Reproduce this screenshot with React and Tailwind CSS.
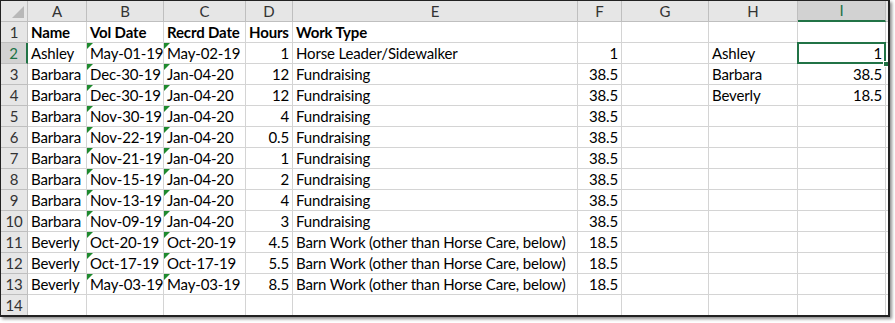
import React from "react";

const cols = ["A", "B", "C", "D", "E", "F", "G", "H", "I"];

const rows = [
  ["Ashley", "May-01-19", "May-02-19", "1", "Horse Leader/Sidewalker", "1", "", "Ashley", "1"],
  ["Barbara", "Dec-30-19", "Jan-04-20", "12", "Fundraising", "38.5", "", "Barbara", "38.5"],
  ["Barbara", "Dec-30-19", "Jan-04-20", "12", "Fundraising", "38.5", "", "Beverly", "18.5"],
  ["Barbara", "Nov-30-19", "Jan-04-20", "4", "Fundraising", "38.5", "", "", ""],
  ["Barbara", "Nov-22-19", "Jan-04-20", "0.5", "Fundraising", "38.5", "", "", ""],
  ["Barbara", "Nov-21-19", "Jan-04-20", "1", "Fundraising", "38.5", "", "", ""],
  ["Barbara", "Nov-15-19", "Jan-04-20", "2", "Fundraising", "38.5", "", "", ""],
  ["Barbara", "Nov-13-19", "Jan-04-20", "4", "Fundraising", "38.5", "", "", ""],
  ["Barbara", "Nov-09-19", "Jan-04-20", "3", "Fundraising", "38.5", "", "", ""],
  ["Beverly", "Oct-20-19", "Oct-20-19", "4.5", "Barn Work (other than Horse Care, below)", "18.5", "", "", ""],
  ["Beverly", "Oct-17-19", "Oct-17-19", "5.5", "Barn Work (other than Horse Care, below)", "18.5", "", "", ""],
  ["Beverly", "May-03-19", "May-03-19", "8.5", "Barn Work (other than Horse Care, below)", "18.5", "", "", ""],
];

// columns holding numbers are right aligned
const rightCols = [3, 5, 8];

function Triangle() {
  return (
    <svg className="absolute left-0 top-0" width="6" height="6" viewBox="0 0 6 6">
      <polygon points="0,0 6,0 0,6" fill="#1e8a2e" />
    </svg>
  );
}

function Cell({ children, right, bold, flag, selected }) {
  return (
    <div
      className={
        "relative h-[21px] border-r border-b border-[#d4d4d4] flex items-end whitespace-nowrap overflow-visible " +
        (right ? "justify-end pr-[3px] " : "pl-[3px] ") +
        (bold ? "font-bold" : "")
      }
    >
      {flag && <Triangle />}
      <span className="relative z-0 leading-[20px]">{children}</span>
      {selected && (
        <>
          <div className="absolute -left-[1px] -top-[1px] right-[-1px] bottom-[-1px] border-2 border-[#217346] z-10" />
          <div className="absolute right-[-4px] bottom-[-4px] w-[6px] h-[6px] bg-[#217346] border border-white z-20" />
        </>
      )}
    </div>
  );
}

export default function App() {
  return (
    <div className="w-[895px] h-[323px] bg-white">
      <div
        className="w-[890px] h-[317px] border border-[#222] border-r-2 border-b-2 overflow-hidden shadow-[2px_2px_3px_rgba(0,0,0,0.45)] text-[15px] tracking-[-0.15px] text-black"
        style={{ fontFamily: "Lato, 'Open Sans', sans-serif" }}
      >
        <div className="grid grid-cols-[27px_59px_77px_82px_47px_285px_44px_87px_89px_88px_1fr]">
          {/* corner */}
          <div className="relative h-[21px] bg-[#e6e6e6] border-r border-b border-[#bfbfbf]">
            <svg className="absolute right-[3px] bottom-[3px]" width="12" height="12" viewBox="0 0 12 12">
              <polygon points="12,0 12,12 0,12" fill="#b8b8b8" />
            </svg>
          </div>
          {cols.map((c) => (
            <div
              key={c}
              className={
                "h-[21px] flex items-center justify-center border-r border-[#bfbfbf] " +
                (c === "I"
                  ? "bg-[#d2d2d2] text-[#217346] border-b-2 border-b-[#217346]"
                  : "bg-[#e6e6e6] text-[#333] border-b")
              }
            >
              {c}
            </div>
          ))}
          <div className="h-[21px] bg-[#e6e6e6] border-b border-[#bfbfbf]" />

          {/* row 1 */}
          <div className="h-[21px] bg-[#e6e6e6] border-r border-b border-[#bfbfbf] flex items-center justify-center text-[#333]">
            1
          </div>
          {["Name", "Vol Date", "Recrd Date", "Hours", "Work Type", "", "", "", ""].map((t, i) => (
            <Cell key={i} bold>
              {t}
            </Cell>
          ))}
          <Cell />

          {rows.map((r, ri) => {
            const n = ri + 2;
            return (
              <React.Fragment key={n}>
                <div
                  className={
                    "h-[21px] border-b border-[#bfbfbf] flex items-center justify-center " +
                    (n === 2
                      ? "bg-[#d2d2d2] text-[#217346] border-r-2 border-r-[#217346]"
                      : "bg-[#e6e6e6] text-[#333] border-r")
                  }
                >
                  {n}
                </div>
                {r.map((v, ci) => (
                  <Cell
                    key={ci}
                    right={rightCols.includes(ci)}
                    flag={ci === 1 || ci === 2}
                    selected={n === 2 && ci === 8}
                  >
                    {v}
                  </Cell>
                ))}
                <Cell />
              </React.Fragment>
            );
          })}

          {/* row 14 */}
          <div className="h-[21px] bg-[#e6e6e6] border-r border-b border-[#bfbfbf] flex items-center justify-center text-[#333]">
            14
          </div>
          {cols.map((c) => (
            <Cell key={c} />
          ))}
          <Cell />
          <div className="h-[21px] bg-[#e6e6e6] border-r border-[#bfbfbf]" />
          {cols.map((c) => (
            <div key={c} className="h-[21px] border-r border-[#d4d4d4]" />
          ))}
        </div>
      </div>
    </div>
  );
}
